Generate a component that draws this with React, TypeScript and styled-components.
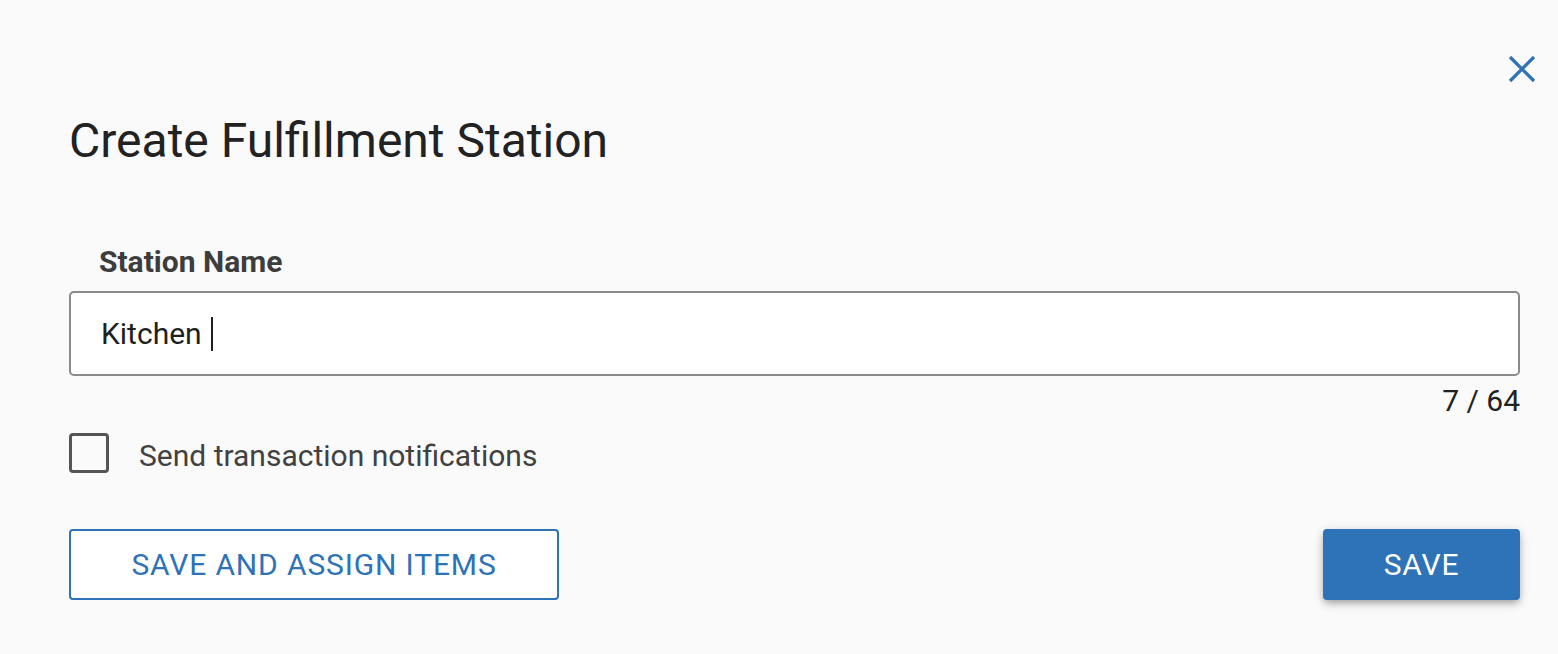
import React from "react";
import styled, { createGlobalStyle } from "styled-components";

const Global = createGlobalStyle`
  html, body {
    margin: 0;
    padding: 0;
    background: #fafafa;
    font-family: Roboto, "Liberation Sans", Arial, sans-serif;
  }
  * { box-sizing: border-box; }
`;

const BLUE = "#2e72b7";

const Page = styled.div`
  width: 1558px;
  height: 654px;
  background: #fafafa;
  display: flex;
  flex-direction: column;
`;

const Header = styled.div`
  display: flex;
  justify-content: flex-end;
  padding: 55px 22px 0 0;
`;

const CloseButton = styled.button`
  width: 28px;
  height: 28px;
  padding: 0;
  border: none;
  background: transparent;
  display: flex;
  cursor: pointer;
`;

const Body = styled.div`
  display: flex;
  flex-direction: column;
  padding: 30px 38px 0 69px;
`;

const Title = styled.h1`
  margin: 0;
  font-size: 48px;
  line-height: 56px;
  font-weight: 400;
  color: #222222;
`;

const FieldLabel = styled.label`
  margin: 75px 0 0 30px;
  font-size: 30px;
  line-height: 35px;
  font-weight: 700;
  color: #3d3d3d;
`;

const Field = styled.div`
  margin-top: 12px;
  height: 85px;
  border: 2px solid #8a8a8a;
  border-radius: 5px;
  background: #ffffff;
  display: flex;
  align-items: center;
  padding: 0 0 0 30px;
`;

const FieldText = styled.span`
  font-size: 30px;
  line-height: 35px;
  color: #1f1f1f;
`;

const Caret = styled.span`
  width: 2px;
  height: 34px;
  margin-left: 9px;
  background: #1f1f1f;
`;

const Counter = styled.div`
  margin-top: 7px;
  text-align: right;
  font-size: 30px;
  line-height: 35px;
  color: #222222;
`;

const CheckRow = styled.label`
  margin-top: 14px;
  display: flex;
  align-items: center;
  gap: 30px;
`;

const CheckBox = styled.span`
  width: 40px;
  height: 40px;
  border: 3px solid #555555;
  border-radius: 4px;
  flex: none;
`;

const CheckLabel = styled.span`
  font-size: 30px;
  line-height: 35px;
  color: #414141;
  padding-top: 6px;
`;

const Actions = styled.div`
  margin-top: 56px;
  display: flex;
  justify-content: space-between;
  align-items: center;
`;

const Button = styled.button<{ $primary?: boolean }>`
  height: 71px;
  width: ${(p) => (p.$primary ? "197px" : "490px")};
  padding: 0;
  border-radius: 4px;
  font-family: Roboto, "Liberation Sans", Arial, sans-serif;
  font-size: 30px;
  font-weight: 400;
  letter-spacing: 0.02857em;
  text-transform: uppercase;
  cursor: pointer;
  display: flex;
  align-items: center;
  justify-content: center;
  border: 2px solid ${BLUE};
  background: ${(p) => (p.$primary ? BLUE : "#ffffff")};
  color: ${(p) => (p.$primary ? "#ffffff" : BLUE)};
  box-shadow: ${(p) =>
    p.$primary
      ? "0 4px 6px -2px rgba(0,0,0,0.2), 0 4px 10px 0 rgba(0,0,0,0.14), 0 2px 12px 0 rgba(0,0,0,0.1)"
      : "none"};
`;

export default function App() {
  return (
    <Page>
      <Global />
      <Header>
        <CloseButton aria-label="Close">
          <svg width="28" height="28" viewBox="0 0 28 28">
            <path
              d="M2 2 L26 26 M26 2 L2 26"
              stroke={BLUE}
              strokeWidth="3.3"
              strokeLinecap="butt"
              fill="none"
            />
          </svg>
        </CloseButton>
      </Header>
      <Body>
        <Title>Create Fulfillment Station</Title>
        <FieldLabel>Station Name</FieldLabel>
        <Field>
          <FieldText>Kitchen</FieldText>
          <Caret />
        </Field>
        <Counter>7 / 64</Counter>
        <CheckRow>
          <CheckBox />
          <CheckLabel>Send transaction notifications</CheckLabel>
        </CheckRow>
        <Actions>
          <Button>Save and assign items</Button>
          <Button $primary>Save</Button>
        </Actions>
      </Body>
    </Page>
  );
}
